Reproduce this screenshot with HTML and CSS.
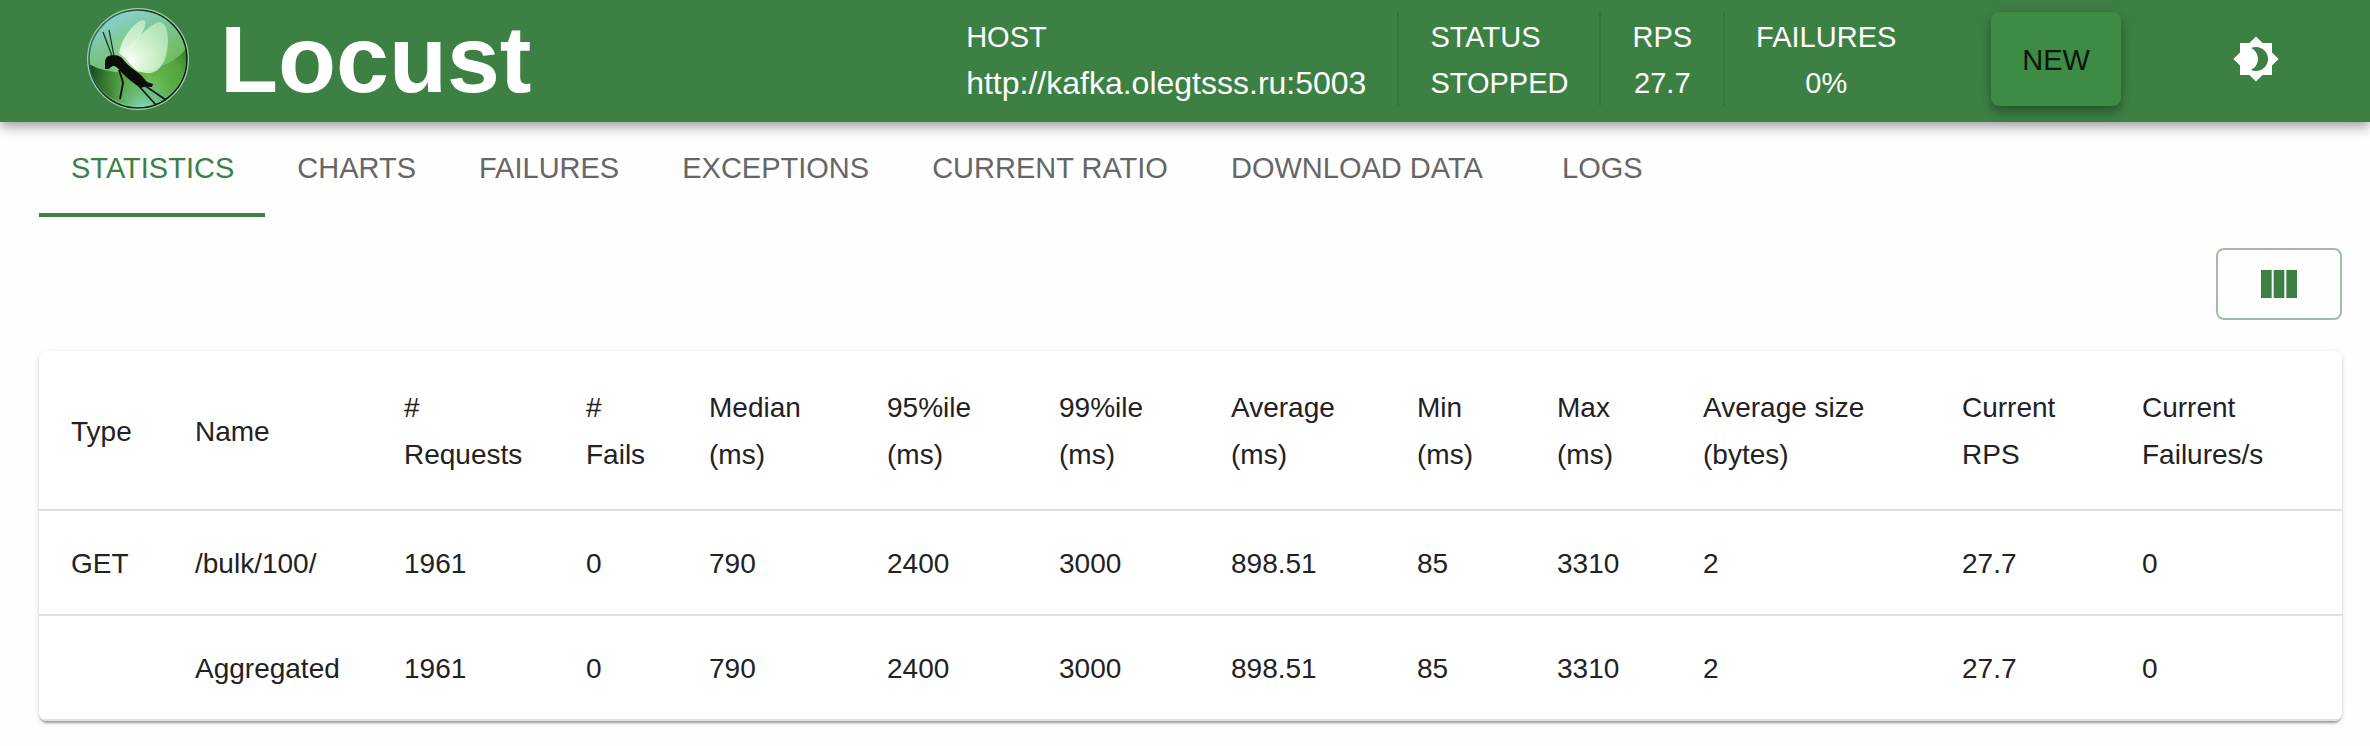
FILE: index.html
```html
<!DOCTYPE html>
<html lang="en">
<head>
<meta charset="utf-8">
<meta name="viewport" content="width=device-width, initial-scale=1">
<title>Locust</title>
<link rel="stylesheet" href="styles.css">
</head>
<body>
<header class="app-bar">
  <a class="brand" href="#">
    <svg class="brand-logo" viewBox="0 0 104 104" aria-hidden="true">
      <defs>
        <linearGradient id="glass" x1="0.2" y1="0" x2="0.6" y2="1">
          <stop offset="0" stop-color="#8fd3dc"/>
          <stop offset="0.3" stop-color="#7cc69a"/>
          <stop offset="0.6" stop-color="#72bd66"/>
          <stop offset="1" stop-color="#63ad55"/>
        </linearGradient>
        <radialGradient id="glow" cx="0.5" cy="0.5" r="0.38">
          <stop offset="0" stop-color="#b6ecae"/>
          <stop offset="1" stop-color="#86d080" stop-opacity="0"/>
        </radialGradient>
        <radialGradient id="pool" gradientUnits="userSpaceOnUse" cx="66" cy="76" r="62">
          <stop offset="0" stop-color="#68bb4b"/>
          <stop offset="0.5" stop-color="#4f9f3a"/>
          <stop offset="0.8" stop-color="#276823"/>
          <stop offset="1" stop-color="#0c360f"/>
        </radialGradient>
        <radialGradient id="shine" gradientUnits="userSpaceOnUse" cx="58" cy="104" r="38">
          <stop offset="0" stop-color="#8adcc8"/>
          <stop offset="1" stop-color="#6fc089" stop-opacity="0"/>
        </radialGradient>
        <linearGradient id="rim" x1="0" y1="0" x2="1" y2="0.5">
          <stop offset="0" stop-color="#3c8f8d"/>
          <stop offset="0.5" stop-color="#10331a"/>
          <stop offset="1" stop-color="#06200b"/>
        </linearGradient>
        <radialGradient id="wing" gradientUnits="userSpaceOnUse" cx="42" cy="54" r="46">
          <stop offset="0" stop-color="#fff"/>
          <stop offset="0.35" stop-color="#e4f7df" stop-opacity="0.9"/>
          <stop offset="1" stop-color="#c8efc8" stop-opacity="0.7"/>
        </radialGradient>
      </defs>
      <circle cx="52" cy="52" r="49" fill="url(#glass)"/>
      <circle cx="52" cy="52" r="49" fill="url(#glow)"/>
      <path d="M3 57Q22 68 52 65Q84 61 100 42A49 49 0 0 1 3 57Z" fill="url(#pool)" opacity="0.85"/>
      <circle cx="52" cy="52" r="49" fill="url(#shine)"/>
      <circle cx="52" cy="52" r="49" fill="none" stroke="url(#rim)" stroke-width="1.6"/>
      <circle cx="52" cy="52" r="50.4" fill="none" stroke="#9fd0ac" stroke-width="1.2"/>
      <path d="M33 46C36 30 48 16 56 13Q61 12 59 19C55 31 46 42 38 50Z" fill="url(#wing)"/>
      <path d="M37 49C46 37 58 22 70 16Q78 13 81 24C84 42 79 58 70 64Q61 69 50 63Z" fill="url(#wing)"/>
      <path d="M19 62V54Q20 48 27 48Q33 48 36 51Q42 59 50 64Q57 69 61 75L67 77L66 80Q58 79 55 81Q45 75 35 65Q30 58 27 59Q24 60 23 62Z" fill="#0a0d0c"/>
      <path d="M17 25L26 49M23 23L28 49" fill="none" stroke="#1c3a2a" stroke-width="1.3"/>
      <path d="M33 63L36 72L37 76L34 92" fill="none" stroke="#0a0d0c" stroke-width="1.8" stroke-linejoin="round"/>
      <path d="M52 78L70 98M58 78L80 93" fill="none" stroke="#0c1b2c" stroke-width="1.8"/>
    </svg>
    <span class="brand-name">Locust</span>
  </a>
  <dl class="stats">
    <div class="stat stat-host"><dt>HOST</dt><dd>http://kafka.olegtsss.ru:5003</dd></div>
    <div class="stat stat-status"><dt>STATUS</dt><dd>STOPPED</dd></div>
    <div class="stat"><dt>RPS</dt><dd>27.7</dd></div>
    <div class="stat"><dt>FAILURES</dt><dd>0%</dd></div>
  </dl>
  <button class="new-button" type="button">NEW</button>
  <button class="theme-button" type="button" aria-label="Toggle theme">
    <svg class="icon" viewBox="0 0 24 24" aria-hidden="true"><path fill="currentColor" d="M20 8.69V4h-4.69L12 .69 8.69 4H4v4.69L.69 12 4 15.31V20h4.69L12 23.31 15.31 20H20v-4.69L23.31 12 20 8.69zM12 18c-.89 0-1.74-.2-2.5-.55C11.56 16.5 13 14.42 13 12s-1.44-4.5-3.5-5.45C10.26 6.2 11.11 6 12 6c3.31 0 6 2.69 6 6s-2.69 6-6 6z"/></svg>
  </button>
</header>
<main class="content">
  <nav class="tabs">
    <a class="tab tab-active" href="#" aria-current="page">STATISTICS</a>
    <a class="tab" href="#">CHARTS</a>
    <a class="tab" href="#">FAILURES</a>
    <a class="tab" href="#">EXCEPTIONS</a>
    <a class="tab" href="#">CURRENT RATIO</a>
    <a class="tab" href="#">DOWNLOAD DATA</a>
    <a class="tab" href="#">LOGS</a>
  </nav>
  <div class="toolbar">
    <button class="columns-button" type="button" aria-label="Select columns">
      <svg class="icon" viewBox="0 0 24 24" aria-hidden="true"><path fill="currentColor" d="M14.67 5v14H9.33V5h5.34zm1 14H21V5h-5.33v14zm-7.34 0V5H3v14h5.33z"/></svg>
    </button>
  </div>
  <div class="paper">
    <table class="stats-table">
      <colgroup>
        <col class="col-type"><col class="col-name"><col class="col-requests"><col class="col-fails"><col class="col-median"><col class="col-percentile"><col class="col-percentile"><col class="col-average"><col class="col-min"><col class="col-max"><col class="col-size"><col class="col-rps"><col class="col-failures">
      </colgroup>
      <thead>
        <tr>
          <th scope="col">Type</th><th scope="col">Name</th><th scope="col"># Requests</th><th scope="col"># Fails</th><th scope="col">Median (ms)</th><th scope="col">95%ile (ms)</th><th scope="col">99%ile (ms)</th><th scope="col">Average (ms)</th><th scope="col">Min (ms)</th><th scope="col">Max (ms)</th><th scope="col">Average size (bytes)</th><th scope="col">Current RPS</th><th scope="col">Current Failures/s</th>
        </tr>
      </thead>
      <tbody>
        <tr><td>GET</td><td>/bulk/100/</td><td>1961</td><td>0</td><td>790</td><td>2400</td><td>3000</td><td>898.51</td><td>85</td><td>3310</td><td>2</td><td>27.7</td><td>0</td></tr>
        <tr><td></td><td>Aggregated</td><td>1961</td><td>0</td><td>790</td><td>2400</td><td>3000</td><td>898.51</td><td>85</td><td>3310</td><td>2</td><td>27.7</td><td>0</td></tr>
      </tbody>
    </table>
  </div>
</main>
</body>
</html>
```

FILE: styles.css
```css
:root {
  --green: #3d8044;
  --text: #222;
  --muted: #666;
}

* {
  box-sizing: border-box;
}

body {
  margin: 0;
  background: #fefefe;
  color: var(--text);
  font-family: "Liberation Sans", Arial, sans-serif;
  font-size: 28px;
}

button {
  font: inherit;
  cursor: pointer;
}

.icon {
  display: block;
  width: 48px;
  height: 48px;
}

.app-bar {
  display: flex;
  align-items: center;
  padding: 7px 90px 11px 86px;
  background: var(--green);
  color: #fff;
  box-shadow: 0 4px 8px -2px rgba(0, 0, 0, 0.2), 0 8px 10px 0 rgba(0, 0, 0, 0.14), 0 2px 20px 0 rgba(0, 0, 0, 0.12);
}

.brand {
  display: flex;
  align-items: center;
  gap: 30px;
  margin-right: auto;
  color: inherit;
  text-decoration: none;
}

.brand-logo {
  width: 104px;
  height: 104px;
}

.brand-name {
  font-size: 95px;
  font-weight: 700;
  line-height: 104px;
}

.stats {
  display: flex;
  margin: 0 64px 0 0;
  font-size: 29px;
}

.stat {
  display: flex;
  flex-direction: column;
  align-items: center;
  padding: 2px 31px 0;
  line-height: 46px;
}

.stat + .stat {
  border-left: 2px solid #38743e;
}

.stat-host,
.stat-status {
  align-items: flex-start;
}

.stat dd {
  margin: 0;
}

.stat-host dd {
  font-size: 32px;
}

.new-button {
  height: 94px;
  padding: 2px 31px 0;
  border: 0;
  border-radius: 8px;
  background: #3d8b45;
  color: #0a150b;
  font-size: 29px;
  box-shadow: 0 4px 8px -2px rgba(0, 0, 0, 0.2), 0 8px 10px 0 rgba(0, 0, 0, 0.14), 0 2px 20px 0 rgba(0, 0, 0, 0.12);
}

.theme-button {
  margin-left: 111px;
  padding: 0;
  border: 0;
  background: none;
  color: #fff;
}

.content {
  padding: 0 28px 24px 39px;
}

.tabs {
  display: flex;
}

.tab {
  min-width: 176px;
  padding: 2px 31px 0 32px;
  border-bottom: 4px solid transparent;
  color: var(--muted);
  font-size: 29px;
  line-height: 89px;
  text-align: center;
  text-decoration: none;
}

.tab-active {
  border-color: var(--green);
  color: var(--green);
}

.toolbar {
  display: flex;
  justify-content: flex-end;
  padding: 31px 0;
}

.columns-button {
  padding: 10px 37px;
  border: 2px solid #9ebfa1;
  border-radius: 8px;
  background: none;
  color: var(--green);
}

.paper {
  overflow: hidden;
  border-radius: 8px;
  background: #fff;
  box-shadow: 0 4px 2px -2px rgba(0, 0, 0, 0.2), 0 2px 2px 0 rgba(0, 0, 0, 0.14), 0 2px 6px 0 rgba(0, 0, 0, 0.12);
}

.stats-table {
  width: 100%;
  border-spacing: 0;
  table-layout: fixed;
}

.stats-table th,
.stats-table td {
  padding: 33px 32px 31px;
  border-bottom: 2px solid #e0e0e0;
  text-align: left;
}

.stats-table th {
  font-weight: 400;
  line-height: 47px;
}

.stats-table td {
  line-height: 39px;
}

.col-type { width: 124px; }
.col-name { width: 209px; }
.col-requests { width: 182px; }
.col-fails { width: 123px; }
.col-median { width: 178px; }
.col-percentile { width: 172px; }
.col-average { width: 186px; }
.col-min { width: 140px; }
.col-max { width: 146px; }
.col-size { width: 259px; }
.col-rps { width: 180px; }
.col-failures { width: 233px; }
```
